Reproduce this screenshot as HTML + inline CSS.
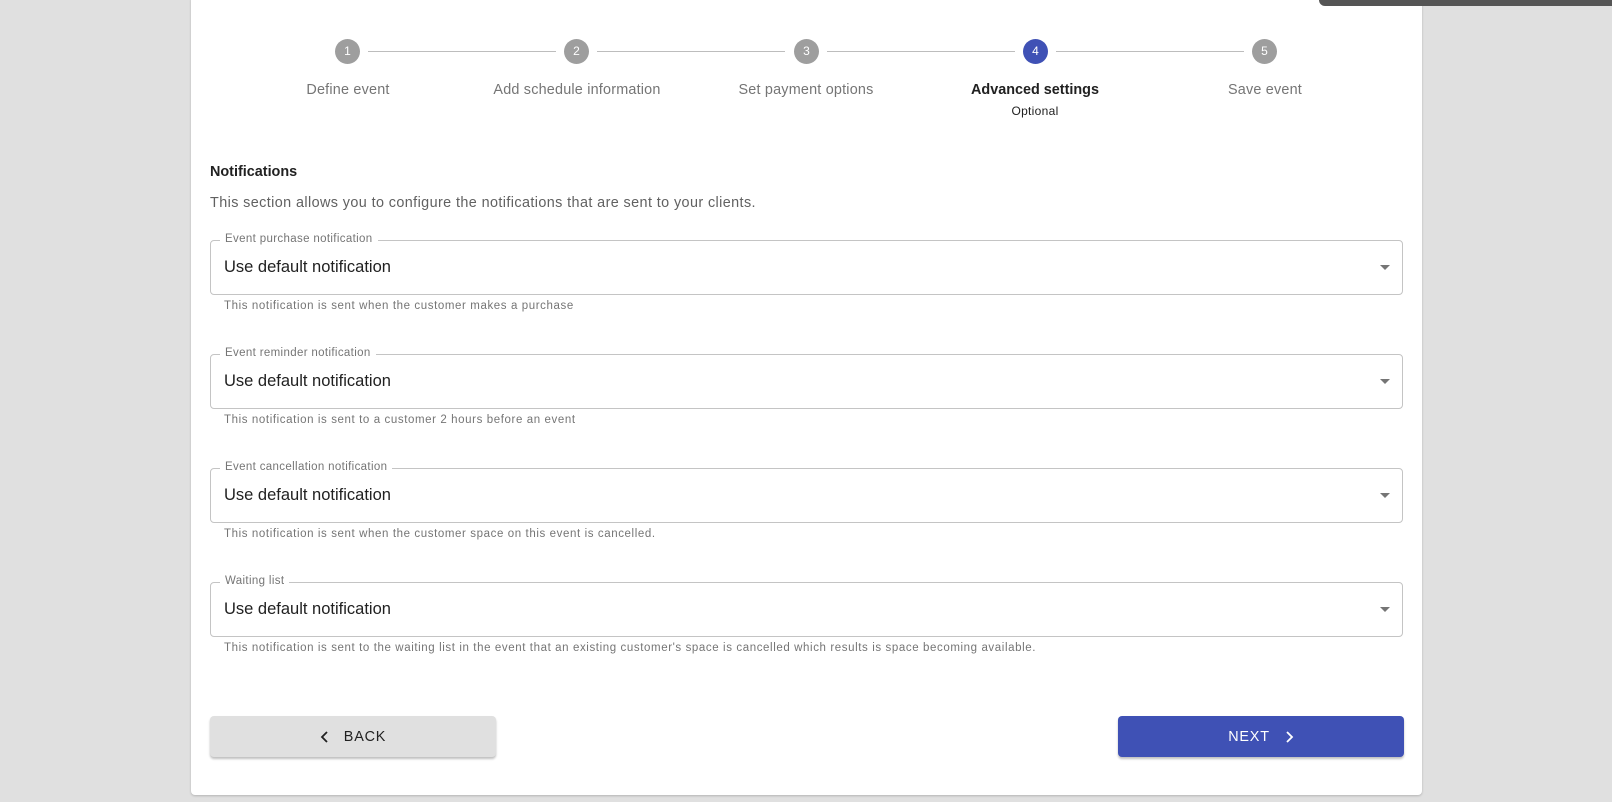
<!DOCTYPE html>
<html><head><meta charset="utf-8"><style>
*{box-sizing:border-box;margin:0;padding:0}
body{width:1612px;height:802px;background:#e0e0e0;font-family:"Liberation Sans",sans-serif;position:relative;overflow:hidden}
.card{position:absolute;left:191px;top:-4px;width:1231px;height:799px;background:#fff;border-radius:4px;box-shadow:0 1px 2px rgba(0,0,0,.2)}
.topbar{position:absolute;left:1319px;top:0;width:293px;height:6px;background:#555;border-bottom-left-radius:8px}
.c{position:absolute;top:39px;width:25px;height:25px;border-radius:50%;background:#9e9e9e;color:#fff;font-size:12px;text-align:center;line-height:25px}
.c.a{background:#3f51b5}
.ln{position:absolute;top:51px;height:1px;background:#bdbdbd}
.lb{position:absolute;top:82px;width:220px;text-align:center;font-size:14.4px;color:#757575;letter-spacing:.2px}
.lb.a{color:#212121;font-weight:bold;letter-spacing:0}
.opt{position:absolute;top:104px;width:220px;text-align:center;font-size:12px;color:#212121;letter-spacing:.3px}
h3{position:absolute;left:210px;top:164px;font-size:14.4px;color:#212121}
.desc{position:absolute;left:210px;top:195px;font-size:14.4px;color:#616161;letter-spacing:.4px}
.f{position:absolute;left:210px;width:1193px;height:55px;border:1px solid #c4c4c4;border-radius:4px}
.f .l{position:absolute;left:9px;top:-8px;background:#fff;padding:0 5px;font-size:11.5px;color:#757575;letter-spacing:.35px}
.f .v{position:absolute;left:13px;top:17px;font-size:16.5px;color:#212121}
.f .ar{position:absolute;right:12px;top:24px;width:0;height:0;border-left:5px solid transparent;border-right:5px solid transparent;border-top:5px solid #757575}
.h{position:absolute;left:224px;font-size:11.5px;color:#757575;letter-spacing:.6px}
.btn{position:absolute;top:716px;width:286px;height:41px;border-radius:4px;font-size:14.4px;font-weight:500;display:flex;align-items:center;justify-content:center;letter-spacing:.8px;box-shadow:0 2px 2px rgba(0,0,0,.25)}
.btn svg{display:block}
</style></head><body>
<div class="card"></div>
<div class="topbar"></div>
<div class="ln" style="left:368px;width:188px"></div>
<div class="ln" style="left:597px;width:188px"></div>
<div class="ln" style="left:827px;width:188px"></div>
<div class="ln" style="left:1056px;width:188px"></div>
<div class="c" style="left:335px">1</div>
<div class="c" style="left:564px">2</div>
<div class="c" style="left:794px">3</div>
<div class="c a" style="left:1023px">4</div>
<div class="c" style="left:1252px">5</div>
<div class="lb" style="left:238px">Define event</div>
<div class="lb" style="left:467px">Add schedule information</div>
<div class="lb" style="left:696px">Set payment options</div>
<div class="lb a" style="left:925px">Advanced settings</div>
<div class="opt" style="left:925px">Optional</div>
<div class="lb" style="left:1155px">Save event</div>
<h3>Notifications</h3>
<div class="desc">This section allows you to configure the notifications that are sent to your clients.</div>
<div class="f" style="top:240px"><span class="l">Event purchase notification</span><span class="v">Use default notification</span><span class="ar"></span></div>
<div class="h" style="top:300px">This notification is sent when the customer makes a purchase</div>
<div class="f" style="top:354px"><span class="l">Event reminder notification</span><span class="v">Use default notification</span><span class="ar"></span></div>
<div class="h" style="top:414px">This notification is sent to a customer 2 hours before an event</div>
<div class="f" style="top:468px"><span class="l">Event cancellation notification</span><span class="v">Use default notification</span><span class="ar"></span></div>
<div class="h" style="top:528px">This notification is sent when the customer space on this event is cancelled.</div>
<div class="f" style="top:582px"><span class="l">Waiting list</span><span class="v">Use default notification</span><span class="ar"></span></div>
<div class="h" style="top:642px">This notification is sent to the waiting list in the event that an existing customer's space is cancelled which results is space becoming available.</div>
<div class="btn" style="left:210px;background:#e0e0e0;color:#212121"><svg width="10" height="12" viewBox="0 0 10 12" style="margin-right:14px"><path d="M7 1L2 6l5 5" fill="none" stroke="#212121" stroke-width="1.8"/></svg>BACK</div>
<div class="btn" style="left:1118px;background:#3f51b5;color:#fff">NEXT<svg width="10" height="12" viewBox="0 0 10 12" style="margin-left:14px"><path d="M3 1l5 5-5 5" fill="none" stroke="#fff" stroke-width="1.8"/></svg></div>
</body></html>
